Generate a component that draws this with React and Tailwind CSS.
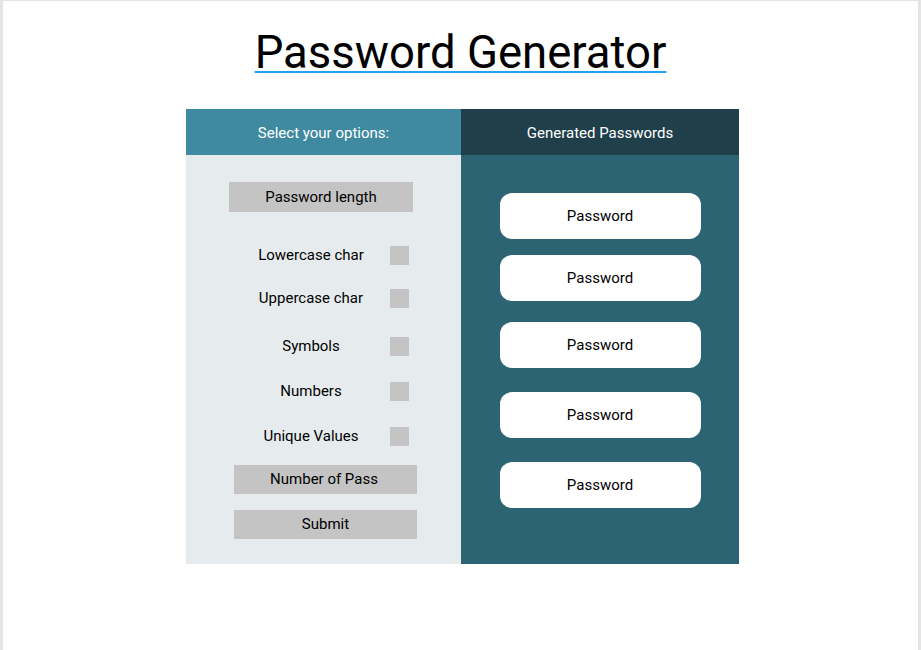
import React from 'react';

const options = [
  { label: 'Lowercase char', mt: 'mt-[34px]' },
  { label: 'Uppercase char', mt: 'mt-[24px]' },
  { label: 'Symbols', mt: 'mt-[29px]' },
  { label: 'Numbers', mt: 'mt-[26px]' },
  { label: 'Unique Values', mt: 'mt-[26px]' },
];

const passwords = ['mt-[38px]', 'mt-[16px]', 'mt-[21px]', 'mt-[24px]', 'mt-[24px]'];

export default function App() {
  return (
    <div className="min-h-[650px] w-[921px] bg-white border-t border-l-[3px] border-r-[3px] border-[#e4e4e4] font-['Roboto',sans-serif]">
      <div className="flex justify-center pt-[25px]">
        <h1 className="text-[45.5px] leading-[54px] text-black underline decoration-[#22a2f0] decoration-2 underline-offset-[3px]">
          Password Generator
        </h1>
      </div>

      <div className="mt-[29px] ml-[183px] flex w-[553px]">
        {/* options */}
        <div className="w-[275px] bg-[#e6ecee]">
          <div className="h-[46px] pt-[2px] bg-[#3f8aa0] flex items-center justify-center text-white text-[15px]">
            Select your options:
          </div>
          <div className="pt-[27px] pb-[25px]">
            <button className="block ml-[43px] w-[184px] h-[30px] bg-[#c4c4c4] text-[15px] text-black">
              Password length
            </button>
            {options.map((o) => (
              <div key={o.label} className={`flex items-center h-[19px] ${o.mt}`}>
                <span className="w-[250px] text-[15px] leading-[19px] text-black text-center">{o.label}</span>
                <span className="w-[19px] h-[19px] bg-[#c4c4c4] ml-[-46px]" />
              </div>
            ))}
            <button className="mt-[19px] ml-[48px] w-[183px] h-[29px] pr-[3px] bg-[#c4c4c4] text-[15px] text-black block">
              Number of Pass
            </button>
            <button className="mt-[16px] ml-[48px] w-[183px] h-[29px] bg-[#c4c4c4] text-[15px] text-black block">
              Submit
            </button>
          </div>
        </div>

        {/* generated */}
        <div className="w-[278px] bg-[#2d6474]">
          <div className="h-[46px] pt-[2px] bg-[#1f3f4a] flex items-center justify-center text-white text-[15px]">
            Generated Passwords
          </div>
          <div className="flex flex-col items-center">
            {passwords.map((mt, i) => (
              <div
                key={i}
                className={`${mt} w-[201px] h-[46px] bg-white rounded-[12px] flex items-center justify-center text-[15px] text-black`}
              >
                Password
              </div>
            ))}
          </div>
        </div>
      </div>
    </div>
  );
}
